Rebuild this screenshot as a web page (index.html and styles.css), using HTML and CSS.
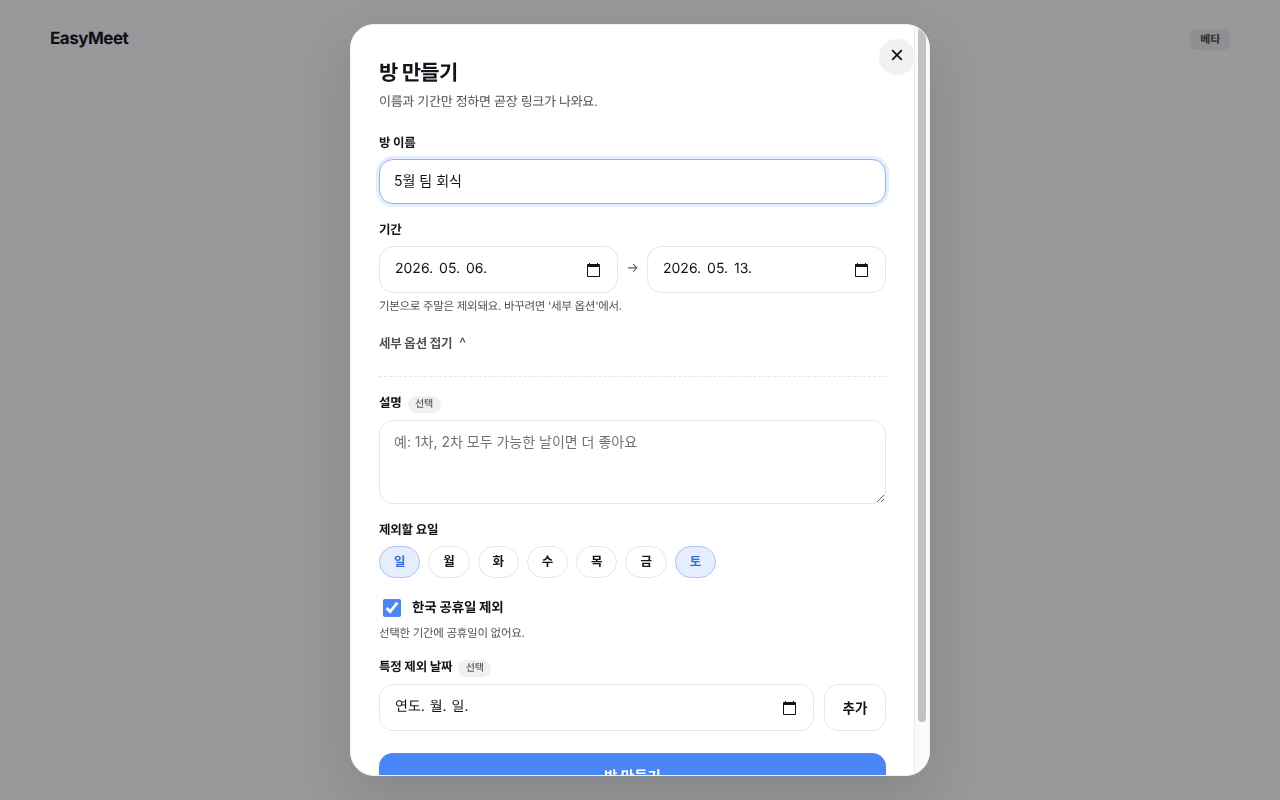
FILE: index.html
```html
<!DOCTYPE html>
<html lang="ko">
<head>
<meta charset="utf-8">
<title>EasyMeet</title>
<link rel="stylesheet" href="styles.css">
</head>
<body>
<header class="topbar">
  <div class="logo">EasyMeet</div>
  <span class="beta">베타</span>
</header>
<div class="overlay">
  <div class="modal">
    <button class="close" type="button" aria-label="닫기">
      <svg viewBox="0 0 12 12" width="12" height="12" fill="none" stroke="currentColor" stroke-width="1.8"><path d="M1.2 1.2l9.6 9.6M10.8 1.2L1.2 10.8"/></svg>
    </button>
    <div class="scroll">
      <h1 class="title">방 만들기</h1>
      <p class="sub">이름과 기간만 정하면 곧장 링크가 나와요.</p>

      <label class="label label-first">방 이름</label>
      <input class="field field-focus" type="text" value="5월 팀 회식">

      <label class="label label-period">기간</label>
      <div class="range">
        <div class="field date"><span class="date-text">2026. 05. 06.</span><svg class="cal" viewBox="0 0 15 16" width="15" height="16"><path d="M13 2h-1V1h-1v1H4V1H3v1H2c-.55 0-1 .45-1 1v11c0 .55.45 1 1 1h11c.55 0 1-.45 1-1V3c0-.55-.45-1-1-1zm0 12H2V5h11v9z"/></svg></div>
        <span class="arrow">→</span>
        <div class="field date"><span class="date-text">2026. 05. 13.</span><svg class="cal" viewBox="0 0 15 16" width="15" height="16"><path d="M13 2h-1V1h-1v1H4V1H3v1H2c-.55 0-1 .45-1 1v11c0 .55.45 1 1 1h11c.55 0 1-.45 1-1V3c0-.55-.45-1-1-1zm0 12H2V5h11v9z"/></svg></div>
      </div>
      <p class="hint">기본으로 주말은 제외돼요. 바꾸려면 '세부 옵션'에서.</p>

      <button class="toggle" type="button">세부 옵션 접기 <span class="caret">^</span></button>
      <div class="divider"></div>

      <div class="label label-row label-desc"><span>설명</span><span class="opt">선택</span></div>
      <textarea class="field area" placeholder="예: 1차, 2차 모두 가능한 날이면 더 좋아요"></textarea>

      <div class="label label-days">제외할 요일</div>
      <div class="days">
        <button class="day on" type="button">일</button>
        <button class="day" type="button">월</button>
        <button class="day" type="button">화</button>
        <button class="day" type="button">수</button>
        <button class="day" type="button">목</button>
        <button class="day" type="button">금</button>
        <button class="day on" type="button">토</button>
      </div>

      <label class="check"><input type="checkbox" checked><span class="check-text">한국 공휴일 제외</span></label>
      <p class="hint">선택한 기간에 공휴일이 없어요.</p>

      <div class="label label-row label-dates"><span>특정 제외 날짜</span><span class="opt">선택</span></div>
      <div class="add-row">
        <div class="field date grow"><span class="date-text empty">연도. 월. 일.</span><svg class="cal" viewBox="0 0 15 16" width="15" height="16"><path d="M13 2h-1V1h-1v1H4V1H3v1H2c-.55 0-1 .45-1 1v11c0 .55.45 1 1 1h11c.55 0 1-.45 1-1V3c0-.55-.45-1-1-1zm0 12H2V5h11v9z"/></svg></div>
        <button class="add" type="button">추가</button>
      </div>

      <button class="submit" type="button">방 만들기</button>
    </div>
    <div class="bar"><div class="thumb"></div></div>
  </div>
</div>
</body>
</html>
```
FILE: styles.css
```css
* { box-sizing: border-box; }
html, body { height: 100%; }
body {
  margin: 0;
  background: #f8f9fa;
  color: #111418;
  font-family: Inter, "Noto Sans CJK KR", sans-serif;
  letter-spacing: -0.3px;
  text-rendering: geometricPrecision;
  overflow: hidden;
}
input, textarea, button { font-family: Inter, "Noto Sans CJK KR", sans-serif; }
.topbar {
  display: flex;
  justify-content: space-between;
  align-items: center;
  padding: 28px 50px 26px;
}
.logo { font-size: 17px; font-weight: 700; letter-spacing: -0.5px; line-height: 22px; }
.beta {
  background: #e9eaec;
  color: #444;
  font-size: 11px;
  font-weight: 700;
  line-height: 21px;
  padding: 0 10px;
  border-radius: 6px;
}
.overlay {
  position: fixed;
  inset: 0;
  background: rgba(10, 11, 13, 0.4);
  display: flex;
  align-items: center;
  justify-content: center;
}
.modal {
  position: relative;
  display: flex;
  width: 580px;
  height: 752px;
  background: #fff;
  border: 1px solid #f1f1f2;
  border-radius: 24px;
  overflow: hidden;
  box-shadow: 0 20px 60px rgba(0, 0, 0, 0.15);
}
.scroll {
  flex: 1 1 0;
  min-width: 0;
  overflow: hidden;
  padding: 31px 28px 27px;
}
.bar {
  flex: none;
  width: 15px;
  padding: 3px 3px 0;
  background: #fafafa;
  border-left: 1px solid #e8e8e8;
}
.thumb { width: 8px; height: 694px; border-radius: 4px; background: #c1c1c1; }
.close {
  position: absolute;
  top: 14px;
  right: 14px;
  width: 36px;
  height: 36px;
  border: 0;
  border-radius: 50%;
  background: #f1f1f2;
  color: #111418;
  display: flex;
  align-items: center;
  justify-content: center;
  padding: 0 0 4px;
  z-index: 1;
}
.title { margin: 0; font-size: 21px; font-weight: 700; line-height: 36px; letter-spacing: -0.75px; }
.sub { margin: 0; font-size: 13px; line-height: 20px; color: #4f5359; }
.label { display: block; font-size: 12.5px; font-weight: 700; line-height: 18px; letter-spacing: -0.2px; color: #111418; }
.label-first { margin-top: 23px; margin-bottom: 6px; }
.label-period { margin-top: 18px; margin-bottom: 6px; }
.label-row { display: flex; align-items: center; gap: 6px; }
.label-desc { margin-top: 18px; margin-bottom: 7px; }
.label-days { margin-top: 18px; margin-bottom: 6px; }
.label-dates { margin-top: 17px; margin-bottom: 7px; }
.opt {
  background: #f0f0f1;
  color: #555a60;
  font-size: 10px;
  font-weight: 500;
  line-height: 17px;
  padding: 0 7.5px;
  border-radius: 9px;
}
.field {
  display: block;
  width: 100%;
  height: 47px;
  border: 1px solid #e6e6e8;
  border-radius: 14px;
  background: #fff;
  color: #111418;
  font-size: 14px;
  font-weight: 400;
  padding: 0 14px;
  outline: none;
}
.field-focus {
  height: 45px;
  padding-bottom: 4px;
  border-color: #8fb2f9;
  box-shadow: 0 0 0 3px #e5edfd;
}
.range { display: flex; align-items: center; gap: 8px; }
.date {
  display: flex;
  align-items: center;
  justify-content: space-between;
  flex: 1 1 0;
  min-width: 0;
  padding: 0 16px 0 15px;
}
.date-text { letter-spacing: 0; word-spacing: 2px; padding-bottom: 2px; }
.date-text.empty { word-spacing: 1px; padding-bottom: 3px; }
.cal { fill: #111418; flex: none; }
.arrow { font-size: 13px; color: #555a60; width: 13px; text-align: center; padding-bottom: 4px; }
.hint { margin: 5px 0 0; font-size: 11.5px; line-height: 17px; color: #4f5359; }
.toggle {
  display: block;
  margin-top: 19px;
  padding: 0;
  border: 0;
  background: none;
  color: #4f5359;
  letter-spacing: -0.2px;
  font-size: 12.5px;
  font-weight: 700;
  line-height: 18px;
}
.caret { margin-left: 4px; font-size: 15px; font-weight: 500; line-height: 18px; }
.divider { margin-top: 23px; border-top: 1px dashed #e6e6e8; }
.area {
  height: 84px;
  padding: 10px 14px;
  resize: vertical;
}
.area::placeholder { color: #6f7379; }
.days { display: flex; gap: 8px; }
.day {
  height: 32px;
  padding: 0 13.9px 3px;
  border: 1px solid #e6e6e8;
  border-radius: 16px;
  background: #fff;
  color: #111418;
  font-size: 12.5px;
  font-weight: 700;
}
.day.on {
  background: #e6eefd;
  border-color: #a9c5fa;
  color: #2f6be4;
}
.check {
  display: flex;
  align-items: center;
  gap: 8px;
  margin-top: 16px;
  font-size: 13.5px;
  font-weight: 700;
  letter-spacing: -0.2px;
}
.check-text { padding-top: 2px; line-height: 24px; }
.check input { width: 18px; height: 18px; margin: 4px 3px 2px 4px; accent-color: #4a86f7; }
.add-row { display: flex; gap: 10px; }
.grow { flex: 1 1 auto; }
.add {
  width: 62px;
  height: 47px;
  padding-bottom: 3px;
  flex: none;
  border: 1px solid #e6e6e8;
  border-radius: 14px;
  background: #fff;
  color: #111418;
  font-size: 13.5px;
  font-weight: 700;
}
.submit {
  display: block;
  width: 100%;
  height: 48px;
  margin-top: 22px;
  padding-bottom: 5px;
  border: 0;
  border-radius: 14px;
  background: #4a86f7;
  color: #fff;
  font-size: 14.5px;
  font-weight: 700;
}
```
